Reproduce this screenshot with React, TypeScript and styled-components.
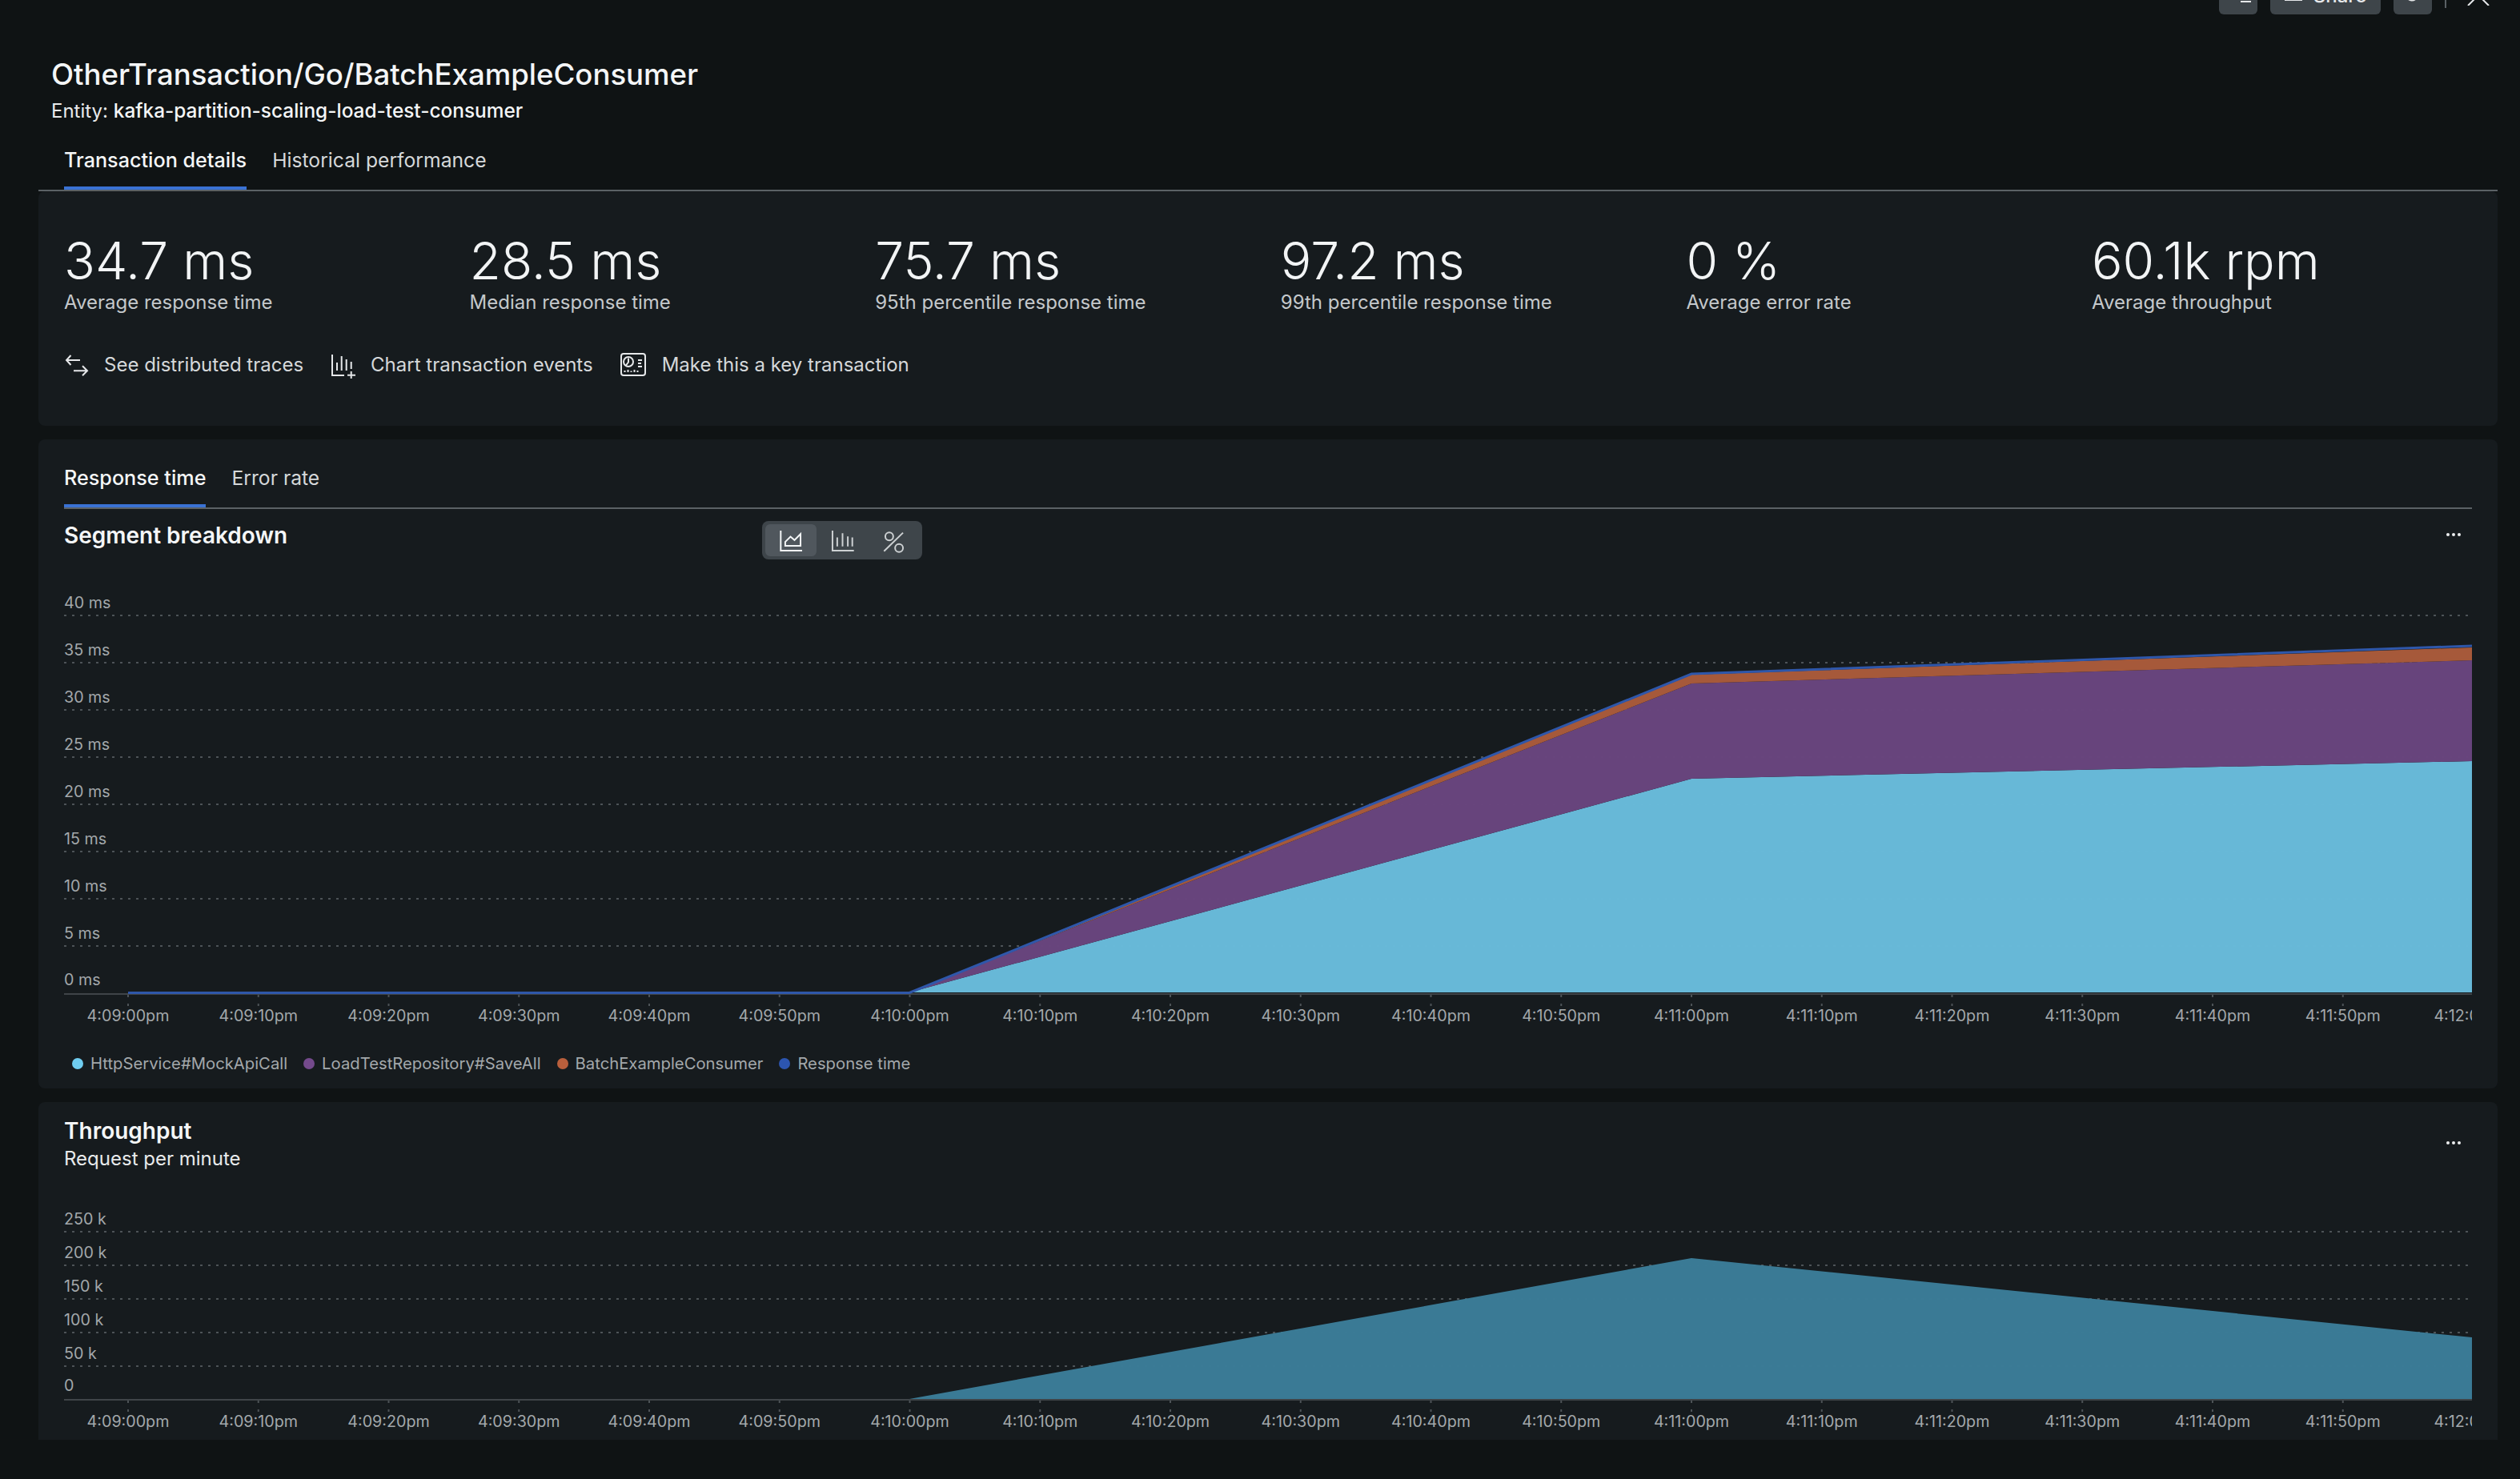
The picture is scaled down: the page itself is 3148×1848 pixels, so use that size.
import React from 'react';
import styled, { createGlobalStyle } from 'styled-components';

const metrics = [
  { value: '34.7 ms', label: 'Average response time' },
  { value: '28.5 ms', label: 'Median response time' },
  { value: '75.7 ms', label: '95th percentile response time' },
  { value: '97.2 ms', label: '99th percentile response time' },
  { value: '0 %', label: 'Average error rate' },
  { value: '60.1k rpm', label: 'Average throughput' },
];

const timeLabels = [
  '4:09:00pm', '4:09:10pm', '4:09:20pm', '4:09:30pm', '4:09:40pm', '4:09:50pm', '4:10:00pm',
  '4:10:10pm', '4:10:20pm', '4:10:30pm', '4:10:40pm', '4:10:50pm', '4:11:00pm',
  '4:11:10pm', '4:11:20pm', '4:11:30pm', '4:11:40pm', '4:11:50pm', '4:12:00pm',
];

const legendItems = [
  { name: 'HttpService#MockApiCall', color: '#6fcdf0' },
  { name: 'LoadTestRepository#SaveAll', color: '#744a8c' },
  { name: 'BatchExampleConsumer', color: '#b95f3c' },
  { name: 'Response time', color: '#2c55b0' },
];

const segmentGrid = [
  { y: 769, label: '40 ms' },
  { y: 828, label: '35 ms' },
  { y: 887, label: '30 ms' },
  { y: 946, label: '25 ms' },
  { y: 1005, label: '20 ms' },
  { y: 1064, label: '15 ms' },
  { y: 1123, label: '10 ms' },
  { y: 1182, label: '5 ms' },
];

const throughputGrid = [
  { y: 1539, label: '250 k' },
  { y: 1581, label: '200 k' },
  { y: 1623, label: '150 k' },
  { y: 1665, label: '100 k' },
  { y: 1707, label: '50 k' },
];

const tickX = (i: number) => 160 + i * 162.75;

type AxisProps = {
  grid: { y: number; label: string }[];
  baseY: number;
  baseLabel: string;
};

const ChartAxis = ({ grid, baseY, baseLabel }: AxisProps) => (
  <>
    {grid.map((g) => (
      <g key={g.label}>
        <GridLine x1={80} x2={3088} y1={g.y} y2={g.y} />
        <AxisText x={80} y={g.y - 9.5}>{g.label}</AxisText>
      </g>
    ))}
    <AxisText x={80} y={baseY - 11}>{baseLabel}</AxisText>
  </>
);

const ChartTicks = ({ baseY }: { baseY: number }) => (
  <>
    <BaseLine x1={80} x2={3088} y1={baseY} y2={baseY} />
    {timeLabels.map((t, i) => (
      <g key={t}>
        <Tick x1={tickX(i)} x2={tickX(i)} y1={baseY + 1} y2={baseY + 4} />
        <Tick x1={tickX(i)} x2={tickX(i)} y1={baseY + 12} y2={baseY + 15} />
        <AxisText x={tickX(i)} y={baseY + 34} textAnchor="middle">{t}</AxisText>
      </g>
    ))}
  </>
);

const TracesIcon = () => (
  <ActionSvg viewBox="0 0 30 30" width={30} height={30}>
    <path d="M3 9h17M8.5 3 3 9l5.5 6" />
    <path d="M12 22.3h17M23 16.3l6 6-6 6" />
  </ActionSvg>
);

const ChartEventsIcon = () => (
  <ActionSvg viewBox="0 0 30 30" width={30} height={30}>
    <path d="M2 2v26h15" />
    <path d="M8 12v10M13.7 4v18M19.7 8v14M25.7 11v9" />
    <path d="M25.7 23v9M21 27.7h10" />
  </ActionSvg>
);

const KeyIcon = () => (
  <ActionSvg viewBox="0 0 32 30" width={32} height={30}>
    <rect x="1" y="1" width="30" height="27" rx="3" />
    <circle cx="10" cy="11" r="6" />
    <path d="M10 6.5v5l-3 4M22 9h5M22 13h4M22 17h5" />
    <path d="M5.5 24v-2M9.5 24v-3M13.5 24v-1.5M17.5 24v-3M21.5 24v-2" />
  </ActionSvg>
);

const AreaToggleIcon = () => (
  <ToggleSvg viewBox="120 50 110 100" width={37} height={33}>
    <path d="M135 62v76h81" />
    <path d="M152 120v-15l20-20 15 13 23-23v45z" />
  </ToggleSvg>
);

const BarToggleIcon = () => (
  <ToggleSvg viewBox="310 50 110 100" width={37} height={33} $muted>
    <path d="M327 62v76h81" />
    <path d="M345 122V88M365 122V72M385 122V84M402 122V88" />
  </ToggleSvg>
);

const PercentToggleIcon = () => (
  <ToggleSvg viewBox="500 50 110 100" width={37} height={33} $muted>
    <circle cx="538" cy="84" r="15" />
    <circle cx="575" cy="128" r="15" />
    <path d="M590 70l-72 70" />
  </ToggleSvg>
);

const MoreDots = ({ $top }: { $top: number }) => (
  <More $top={$top}>
    <MoreDot />
    <MoreDot />
    <MoreDot />
  </More>
);

export default function App() {
  return (
    <>
      <GlobalStyle />
      <Page>
        <TopBar>
          <TopButton $w={48}>
            <TopSvg viewBox="0 0 32 16" width={32} height={16}>
              <path d="M1 0v5h11M19 9h13M20 5l6-6" />
            </TopSvg>
          </TopButton>
          <TopButton $w={138}>
            <TopSvg viewBox="0 0 22 16" width={22} height={16}>
              <path d="M1 0v7h20V0M11 4v-6" />
            </TopSvg>
            <ShareLabel>Share</ShareLabel>
          </TopButton>
          <TopButton $w={48}>
            <TopSvg viewBox="0 0 20 16" width={20} height={16}>
              <path d="M2 0a7 7 0 0 0 14 1" />
            </TopSvg>
          </TopButton>
          <TopDivider />
          <CloseSvg viewBox="0 0 28 8" width={28} height={8}>
            <path d="M1 8 9 0M27 8 19 0" />
          </CloseSvg>
        </TopBar>

        <Title>OtherTransaction/Go/BatchExampleConsumer</Title>
        <Entity>Entity: <strong>kafka-partition-scaling-load-test-consumer</strong></Entity>

        <MainTabs>
          <Tab $active>Transaction details</Tab>
          <Tab>Historical performance</Tab>
        </MainTabs>

        <SummaryCard>
          <MetricGrid>
            {metrics.map((m) => (
              <div key={m.label}>
                <MetricValue>{m.value}</MetricValue>
                <MetricLabel>{m.label}</MetricLabel>
              </div>
            ))}
          </MetricGrid>
          <Actions>
            <Action><TracesIcon />See distributed traces</Action>
            <Action><ChartEventsIcon />Chart transaction events</Action>
            <Action><KeyIcon />Make this a key transaction</Action>
          </Actions>
        </SummaryCard>

        <ChartCard>
          <ChartTabs>
            <Tab $active>Response time</Tab>
            <Tab>Error rate</Tab>
          </ChartTabs>
          <SegmentHeader>
            <ChartTitle>Segment breakdown</ChartTitle>
            <ToggleGroup>
              <ToggleItem $active><AreaToggleIcon /></ToggleItem>
              <ToggleItem><BarToggleIcon /></ToggleItem>
              <ToggleItem><PercentToggleIcon /></ToggleItem>
            </ToggleGroup>
            <MoreDots $top={5} />
          </SegmentHeader>
          <ChartSvg viewBox="80 720 3008 570" width={3008} height={570}>
            <ChartAxis grid={segmentGrid} baseY={1242} baseLabel="0 ms" />
            <ChartTicks baseY={1242} />
            <path d="M1136 1240L2113 973L3088 951V1240Z" fill="#69bbda" fillOpacity={0.985} />
            <path d="M1136 1240L2113 854L3088 825V951L2113 973Z" fill="#69457e" fillOpacity={0.985} />
            <path d="M1136 1240L2113 843L3088 809V825L2113 854Z" fill="#a6593a" />
            <path d="M160 1240.5H1136L2113 842L3088 807" fill="none" stroke="#2f57aa" strokeWidth={3} />
          </ChartSvg>
          <Legend>
            {legendItems.map((l) => (
              <LegendItem key={l.name}>
                <LegendDot $color={l.color} />
                {l.name}
              </LegendItem>
            ))}
          </Legend>
        </ChartCard>

        <ThroughputCard>
          <ThroughputHeader>
            <div>
              <ChartTitle>Throughput</ChartTitle>
              <ChartSubtitle>Request per minute</ChartSubtitle>
            </div>
            <MoreDots $top={21} />
          </ThroughputHeader>
          <ThroughputSvg viewBox="80 1480 3008 319" width={3008} height={319}>
            <ChartAxis grid={throughputGrid} baseY={1749} baseLabel="0" />
            <path d="M1136 1748L2113 1572L3088 1671V1748Z" fill="#3b7c97" fillOpacity={0.985} />
            <ChartTicks baseY={1749} />
          </ThroughputSvg>
        </ThroughputCard>
      </Page>
    </>
  );
}

const GlobalStyle = createGlobalStyle`
  html, body {
    margin: 0;
    padding: 0;
    background: #0f1314;
    overflow: hidden;
  }
  body {
    font-family: Inter, "Noto Sans", sans-serif;
    color: #f2f4f5;
  }
  * {
    box-sizing: border-box;
  }
`;

const Page = styled.div`
  width: 3148px;
  height: 1848px;
  padding: 0 28px 0 48px;
  overflow: hidden;
`;

const TopBar = styled.div`
  height: 18px;
  display: flex;
  justify-content: flex-end;
  align-items: flex-end;
  gap: 16px;
  padding-right: 10px;
`;

const TopButton = styled.div<{ $w: number }>`
  width: ${(p) => p.$w}px;
  height: 48px;
  flex: none;
  display: flex;
  align-items: flex-end;
  justify-content: center;
  gap: 14px;
  padding-bottom: 9px;
  background: #3e454a;
  border-radius: 6px;
`;

const TopSvg = styled.svg`
  flex: none;
  fill: none;
  stroke: #e6e8ea;
  stroke-width: 2;
  overflow: visible;
`;

const ShareLabel = styled.span`
  font-size: 24px;
  font-weight: 500;
  line-height: 24px;
  margin-bottom: 2px;
  color: #e6e8ea;
`;

const TopDivider = styled.div`
  width: 2px;
  height: 10px;
  margin: 0 0 8px 0;
  background: #5a6065;
`;

const CloseSvg = styled.svg`
  flex: none;
  margin: 0 0 11px 10px;
  fill: none;
  stroke: #e6e8ea;
  stroke-width: 2;
`;

const Title = styled.h1`
  margin: 53px 0 0 16px;
  font-size: 36.6px;
  line-height: 44px;
  font-weight: 500;
  color: #f4f6f7;
`;

const Entity = styled.div`
  margin: 8px 0 0 16px;
  height: 32px;
  font-size: 24px;
  line-height: 32px;
  color: #e8eaeb;

  strong {
    font-size: 24.4px;
    line-height: 1;
    font-weight: 500;
    color: #f4f6f7;
  }
`;

const MainTabs = styled.div`
  margin-top: 29px;
  padding-left: 32px;
  display: flex;
  gap: 32px;
  border-bottom: 2px solid #5b6165;
`;

const Tab = styled.div<{ $active?: boolean }>`
  padding-bottom: 21px;
  font-size: ${(p) => (p.$active ? 25.2 : 24.7)}px;
  line-height: 32px;
  font-weight: ${(p) => (p.$active ? 500 : 400)};
  color: ${(p) => (p.$active ? '#f4f6f7' : '#d5d8da')};
  box-shadow: ${(p) => (p.$active ? 'inset 0 -4px 0 #3a72d4' : 'none')};
`;

const Card = styled.section`
  background: #161b1e;
  border-radius: 8px;
`;

const SummaryCard = styled(Card)`
  height: 293px;
  padding: 49px 0 0 32px;
`;

const MetricGrid = styled.div`
  display: grid;
  grid-template-columns: repeat(6, 506.6px);
`;

const MetricValue = styled.div`
  font-size: 64.2px;
  line-height: 76px;
  font-weight: 350;
  color: #f2f4f5;
`;

const MetricLabel = styled.div`
  margin-top: -2px;
  font-size: 24px;
  line-height: 32px;
  color: #c4c8cb;
`;

const Actions = styled.div`
  margin-top: 46px;
  display: flex;
  gap: 34px;
`;

const Action = styled.div`
  display: flex;
  align-items: center;
  gap: 20px;
  font-size: 24px;
  line-height: 32px;
  color: #d5d8da;
`;

const ActionSvg = styled.svg`
  flex: none;
  fill: none;
  stroke: #e6e8ea;
  stroke-width: 2;
  overflow: visible;
`;

const ChartCard = styled(Card)`
  margin-top: 17px;
  padding: 32px 32px 17px;
`;

const ChartTabs = styled.div`
  display: flex;
  gap: 32px;
  border-bottom: 2px solid #5b6165;
`;

const SegmentHeader = styled.div`
  margin-top: 15px;
  height: 48px;
  display: grid;
  grid-template-columns: 872px auto 1fr;
`;

const ChartTitle = styled.h2`
  margin: 0;
  font-size: 28px;
  line-height: 36px;
  font-weight: 600;
  color: #f4f6f7;
`;

const ChartSubtitle = styled.div`
  margin-top: 1px;
  font-size: 24px;
  line-height: 32px;
  color: #e8eaeb;
`;

const ToggleGroup = styled.div`
  display: flex;
  height: 48px;
  padding: 4px;
  background: #3e454a;
  border-radius: 8px;
`;

const ToggleItem = styled.div<{ $active?: boolean }>`
  width: 64px;
  display: flex;
  align-items: center;
  justify-content: center;
  border-radius: 6px;
  background: ${(p) => (p.$active ? '#50575d' : 'transparent')};
`;

const ToggleSvg = styled.svg<{ $muted?: boolean }>`
  fill: none;
  stroke: ${(p) => (p.$muted ? '#cdd1d3' : '#f4f6f7')};
  stroke-width: 6;
`;

const More = styled.div<{ $top: number }>`
  justify-self: end;
  align-self: flex-start;
  margin: ${(p) => p.$top}px 14px 0 0;
  height: 24px;
  display: flex;
  align-items: center;
  gap: 3px;
`;

const MoreDot = styled.span`
  width: 4px;
  height: 4px;
  border-radius: 50%;
  background: #eceeef;
`;

const ChartSvg = styled.svg`
  display: block;
  margin-top: 21px;
  overflow: hidden;
`;

const GridLine = styled.line`
  stroke: #4d5357;
  stroke-width: 2;
  stroke-dasharray: 3 7;
`;

const BaseLine = styled.line`
  stroke: #3f4448;
  stroke-width: 2;
`;

const Tick = styled.line`
  stroke: #4d5357;
  stroke-width: 2;
`;

const AxisText = styled.text`
  font-family: Inter, "Noto Sans", sans-serif;
  font-size: 19.7px;
  fill: #a3a8ab;
`;

const Legend = styled.div`
  margin-top: 25px;
  padding-left: 10px;
  display: flex;
  gap: 20px;
`;

const LegendItem = styled.div`
  display: flex;
  align-items: center;
  gap: 9px;
  font-size: 20.25px;
  line-height: 28px;
  color: #a3a8ab;
`;

const LegendDot = styled.span<{ $color: string }>`
  width: 14px;
  height: 14px;
  border-radius: 50%;
  background: ${(p) => p.$color};
`;

const ThroughputCard = styled(Card)`
  margin-top: 17px;
  height: 422px;
  padding: 18px 32px 0;
  border-radius: 8px 8px 0 0;
`;

const ThroughputHeader = styled.div`
  display: flex;
  justify-content: space-between;
`;

const ThroughputSvg = styled.svg`
  display: block;
  margin-top: 16px;
  overflow: hidden;
`;
